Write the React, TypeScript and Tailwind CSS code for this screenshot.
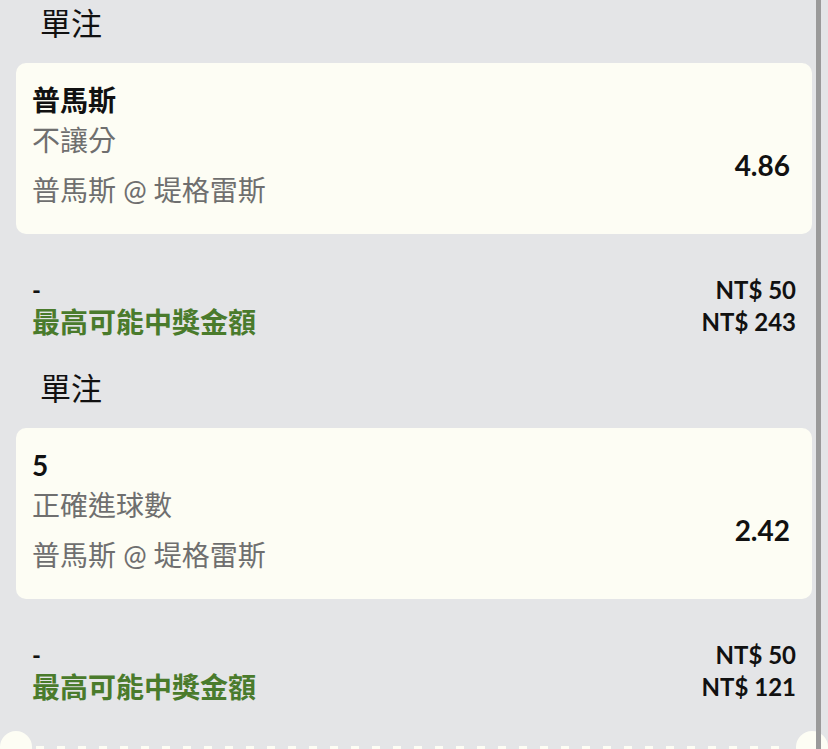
const bets = [
	{
		id: 1,
		pick: "普馬斯",
		market: "不讓分",
		event: "普馬斯 @ 堤格雷斯",
		odds: "4.86",
		stake: 50,
		payout: 243,
	},
	{
		id: 2,
		pick: "5",
		market: "正確進球數",
		event: "普馬斯 @ 堤格雷斯",
		odds: "2.42",
		stake: 50,
		payout: 121,
	},
];

export default function App() {
	return (
		<div className="relative h-[749px] overflow-hidden bg-[#e4e5e7] font-['Lato','Noto_Sans_CJK_TC',sans-serif] text-[#111]">
			{bets.map((bet) => (
				<section key={bet.id}>
					{/* heading */}
					<h2 className="h-[47px] flex items-center pl-[40px] text-[31px] font-normal">
						單注
					</h2>

					{/* bet card */}
					<div className="mx-4 mt-4 h-[171px] rounded-[10px] bg-[#fdfdf4] pl-4 pr-[22px] pt-[17px]">
						<p className="text-[28px] leading-[40px] font-bold">{bet.pick}</p>
						<div className="flex items-center justify-between">
							<div className="text-[28px] text-[#6f6f6f]">
								<p className="leading-[40px]">{bet.market}</p>
								<p className="leading-[40px] mt-[10px]">{bet.event}</p>
							</div>
							<p className="text-[28px] font-bold">{bet.odds}</p>
						</div>
					</div>

					{/* stake + payout */}
					<div className="px-8 pt-[40px] pb-[27px]">
						<div className="flex justify-between items-center h-[32px]">
							<span className="text-[24px] font-bold">-</span>
							<span className="text-[24px] font-bold">NT$ {bet.stake}</span>
						</div>
						<div className="flex justify-between items-center h-[32px]">
							<span className="text-[28px] font-bold text-[#4a7b2c]">
								最高可能中獎金額
							</span>
							<span className="text-[24px] font-bold">NT$ {bet.payout}</span>
						</div>
					</div>
				</section>
			))}

			{/* perforated edge of next ticket */}
			<div className="flex items-start">
				<div className="w-8 h-8 rounded-full bg-[#fdfdf4] shrink-0 mt-px" />
				<div className="flex-1 mt-[16px] mx-1 h-[3px] bg-[repeating-linear-gradient(90deg,#fdfdf4_0_8px,transparent_8px_21px)]" />
				<div className="w-8 h-8 rounded-full bg-[#fdfdf4] shrink-0 mt-px" />
			</div>

			{/* scroll indicator */}
			<div className="absolute top-0 bottom-0 right-[7px] w-[5px] bg-[#9a9a9a]" />
		</div>
	);
}
